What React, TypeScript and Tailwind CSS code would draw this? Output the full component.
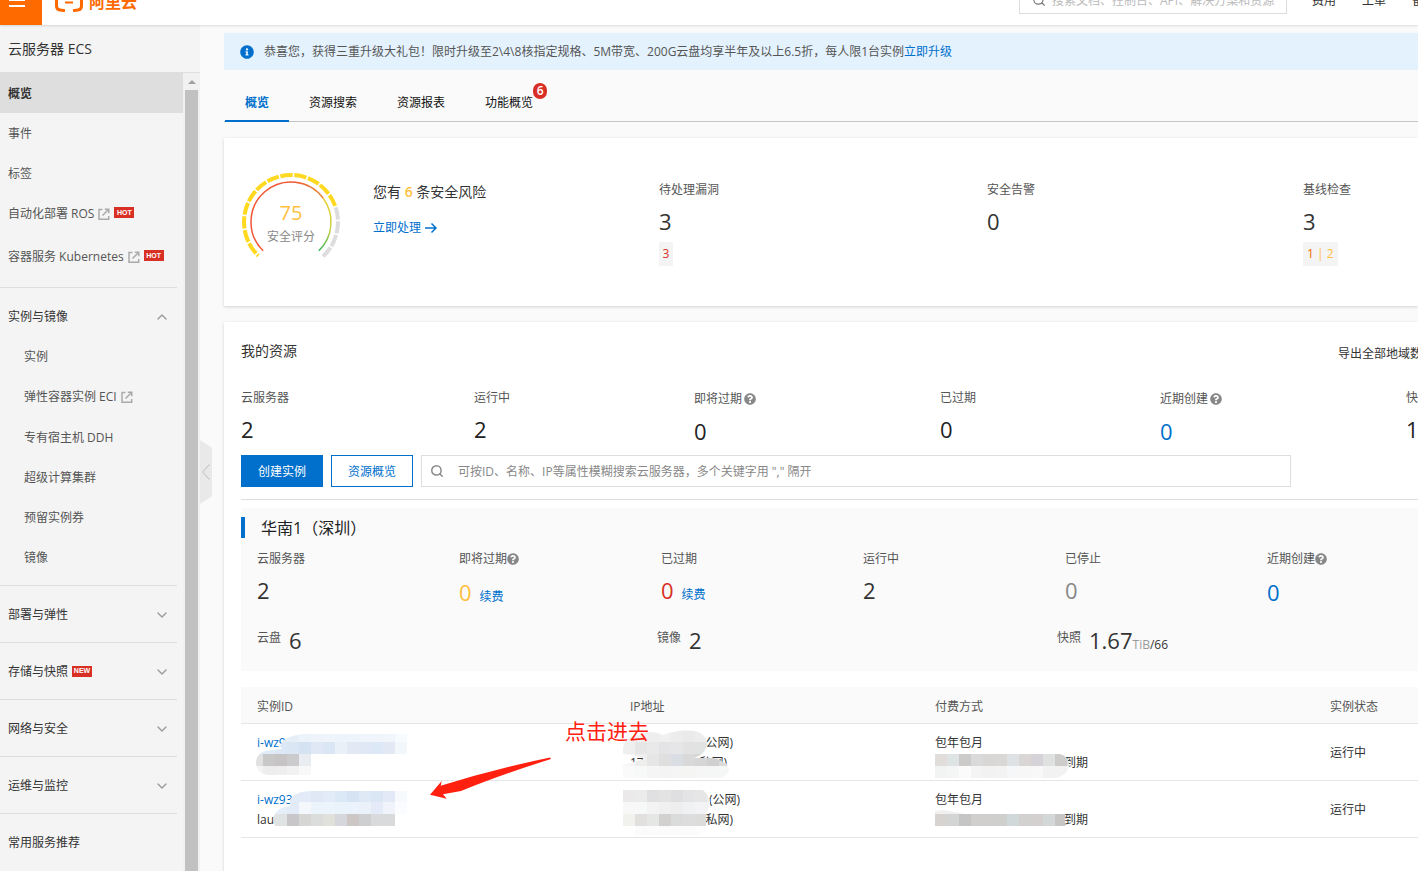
import { ReactNode, useId } from "react";
import { ChevronDown, ChevronUp, Search } from "lucide-react";
import { FaInfoCircle, FaQuestionCircle } from "react-icons/fa";

const topLinks = ["费用", "工单", "备案"];

const mainMenu = [
  { name: "概览", active: true },
  { name: "事件" },
  { name: "标签" },
  { name: "自动化部署 ROS", external: true, tag: "HOT" },
  { name: "容器服务 Kubernetes", external: true, tag: "HOT" },
];

const imageMenu = [
  { name: "实例" },
  { name: "弹性容器实例 ECI", external: true },
  { name: "专有宿主机 DDH" },
  { name: "超级计算集群" },
  { name: "预留实例券" },
  { name: "镜像" },
];

const groups = [
  { name: "部署与弹性" },
  { name: "存储与快照", tag: "NEW" },
  { name: "网络与安全" },
  { name: "运维与监控" },
];

const tabs = [
  { name: "概览", active: true },
  { name: "资源搜索" },
  { name: "资源报表" },
  { name: "功能概览", badge: 6 },
];

const resources = [
  { name: "云服务器", value: "2", width: "w-[233px]" },
  { name: "运行中", value: "2", width: "w-[220px]" },
  { name: "即将过期", value: "0", width: "w-[246px]", help: true },
  { name: "已过期", value: "0", width: "w-[220px]" },
  { name: "近期创建", value: "0", width: "w-[246px]", help: true, color: "text-[#0070cc]" },
  { name: "快照", value: "1.67", width: "w-[100px]" },
];

const regionStats = [
  { name: "云服务器", value: "2", color: "text-[#333]" },
  { name: "即将过期", value: "0", color: "text-[#ffbf40]", help: true, renew: true },
  { name: "已过期", value: "0", color: "text-[#d93026]", renew: true },
  { name: "运行中", value: "2", color: "text-[#333]" },
  { name: "已停止", value: "0", color: "text-[#888]" },
  { name: "近期创建", value: "0", color: "text-[#0070cc]", help: true },
];

const Tag = ({ children }: { children: ReactNode }) => (
  <span className="mb-0.5 flex h-[11px] w-5 items-center justify-center bg-[#d93026] font-['Liberation_Sans',sans-serif] text-[7px] font-bold text-white">
    {children}
  </span>
);

const ExternalIcon = () => (
  <svg className="size-3 shrink-0" viewBox="0 0 12 12" fill="none" stroke="#aaa" strokeWidth="1.5">
    <path d="M4.5 1.5H1v9.7h9.7V8" />
    <path d="M4.5 7.5 10 2M6.8 1.3h4v4" />
  </svg>
);

const Help = () => (
  <button type="button" aria-label="帮助" className="text-[#888]">
    <FaQuestionCircle className="size-3" />
  </button>
);

type MenuItem = { name: string; active?: boolean; external?: boolean; tag?: string };

const MenuLink = ({ item, className }: { item: MenuItem; className: string }) => (
  <a
    href="#"
    className={`flex items-center gap-1 ${className} ${
      item.tag ? "h-[43px] pb-0.5" : item.external ? "h-[41px]" : "h-10 pt-0.5"
    } ${item.active ? "bg-[#dedede] font-semibold text-[#333]" : "text-[#555]"}`}
  >
    {item.name}
    {item.external && <ExternalIcon />}
    {item.tag && <Tag>{item.tag}</Tag>}
  </a>
);

// Pixelated patch that hides private values, 12px per cell
const Mosaic = ({
  rows,
  shape,
  className,
}: {
  rows: string[];
  shape: string;
  className: string;
}) => {
  const id = useId();
  return (
    <svg className={`absolute h-12 w-[156px] ${className}`} viewBox="0 0 156 48" aria-hidden="true">
      <clipPath id={id}>
        <path d={shape} />
      </clipPath>
      <g clipPath={`url(#${id})`} shapeRendering="crispEdges">
        <rect width="156" height="48" fill="#fcfcfc" />
        {rows.map((row, y) =>
          row.split(" ").map((color, x) => (
            <rect key={`${x}-${y}`} x={x * 12} y={y * 12} width="12" height="12" fill={`#${color}`} />
          )),
        )}
      </g>
    </svg>
  );
};

const Logo = () => (
  <svg className="h-5 w-7" viewBox="0 0 28 20" fill="none" stroke="#ff6a00" strokeWidth="3">
    <path d="M10 1.5H5Q1.5 1.5 1.5 5v9q0 3.5 3.5 4l5 .7" />
    <path d="M18 1.5h5q3.5 0 3.5 3.5v9q0 3.5-3.5 4l-5 .7" />
    <path d="M10 10.5h8" strokeWidth="2" />
  </svg>
);

const Header = () => (
  <header className="z-10 h-[25px] shrink-0 overflow-hidden bg-white shadow-[0_1px_2px_rgba(0,0,0,0.12)]">
    <div className="-mt-[25px] flex h-[50px] items-center">
      <button
        type="button"
        aria-label="菜单"
        className="flex h-[50px] w-[42px] flex-col justify-center gap-1 bg-[#ff6a00] pl-[9px]"
      >
        <span className="h-0.5 w-4 bg-white" />
        <span className="h-0.5 w-4 bg-white" />
        <span className="h-0.5 w-4 bg-white" />
      </button>
      <a href="#" className="ml-[13px] flex items-center gap-1.5 pt-1 text-base font-bold text-[#ff6a00]">
        <Logo />
        阿里云
      </a>
      <label className="ml-auto flex h-7 w-[268px] items-center border border-[#ddd] pl-3">
        <Search className="size-[14px] shrink-0 text-[#777]" />
        <input
          aria-label="搜索"
          className="ml-1.5 w-full pt-0.5 text-xs outline-none placeholder:text-[#bbb]"
          placeholder="搜索文档、控制台、API、解决方案和资源"
        />
      </label>
      <nav className="ml-[25px] flex w-[106px] gap-[26px] overflow-hidden pt-0.5 text-[#333]">
        {topLinks.map((link) => (
          <a key={link} href="#" className="shrink-0">
            {link}
          </a>
        ))}
      </nav>
    </div>
  </header>
);

const Sidebar = () => (
  <aside className="relative flex w-[200px] shrink-0 flex-col bg-[#f4f4f4]">
    <h1 className="flex h-12 shrink-0 items-center border-b border-[#dedede] pl-2 text-sm text-[#333]">
      云服务器 ECS
    </h1>
    <div className="flex min-h-0 flex-1">
      <nav className="flex-1 overflow-hidden">
        <div>
          {mainMenu.map((item) => (
            <MenuLink key={item.name} item={item} className="pl-2" />
          ))}
        </div>
        <div className="mr-1.5 mt-2 border-y border-[#dedede] py-2">
          <button type="button" className="flex h-10 w-full items-center justify-between pl-2 pr-[7px] pt-0.5 text-[#333]">
            实例与镜像
            <ChevronUp className="size-4 text-[#999]" strokeWidth={2} />
          </button>
          {imageMenu.map((item) => (
            <MenuLink key={item.name} item={item} className="pl-6" />
          ))}
        </div>
        {groups.map((group) => (
          <div key={group.name} className="mr-1.5 border-b border-[#dedede] py-2">
            <button type="button" className="flex h-10 w-full items-center gap-1 pl-2 pr-[7px] pt-0.5 text-[#333]">
              {group.name}
              {group.tag && <Tag>{group.tag}</Tag>}
              <ChevronDown className="ml-auto size-4 text-[#999]" strokeWidth={2} />
            </button>
          </div>
        ))}
        <a href="#" className="mt-2 flex h-10 items-center pl-2 pt-0.5 text-[#333]">
          常用服务推荐
        </a>
      </nav>
      <div className="flex w-[17px] flex-col items-center bg-[#f1f1f1]" aria-hidden="true">
        <svg className="h-[17px] w-2 shrink-0" viewBox="0 0 8 17">
          <path d="M0 11h8L4 7z" fill="#a0a0a0" />
        </svg>
        <div className="w-[13px] flex-1 bg-[#c1c1c1]" />
      </div>
    </div>
    <button
      type="button"
      aria-label="收起"
      className="absolute left-full top-[415px] flex h-16 w-3 items-center justify-center bg-[#e9e9e9] text-[#bbb] [clip-path:polygon(0_0,100%_12%,100%_88%,0_100%)]"
    >
      <svg className="h-4 w-2" viewBox="0 0 8 16" fill="none" stroke="currentColor">
        <path d="M7.5 .5.7 8l6.800 7.500" />
      </svg>
    </button>
  </aside>
);

const polar = (deg: number, r: number) => {
  const rad = (deg * Math.PI) / 180;
  return `${(52 + r * Math.cos(rad)).toFixed(2)} ${(52 + r * Math.sin(rad)).toFixed(2)}`;
};

const arc = (from: number, to: number, r: number) =>
  `M${polar(from, r)}A${r} ${r} 0 ${to - from > 180 ? 1 : 0} 1 ${polar(to, r)}`;

// Degrees at which the dial is cut, clockwise from three o'clock
const cuts = [133, 137, 154, 171, 188, 205, 222, 239, 256, 273, 290, 307, 324, 341, 358, 375, 392, 408];

const Gauge = () => (
  <div className="relative size-[104px] shrink-0">
    <svg viewBox="0 0 104 104" className="size-full" fill="none">
      <defs>
        <linearGradient id="risk" x1="0" y1="0" x2="1" y2="0">
          <stop offset="0.6" stopColor="#f15533" />
          <stop offset="1" stopColor="#e8903a" />
        </linearGradient>
        <linearGradient id="safe" x1="0" y1="0" x2="0" y2="1">
          <stop offset="0" stopColor="#e8d030" />
          <stop offset="0.6" stopColor="#c6cf45" />
          <stop offset="1" stopColor="#35b558" />
        </linearGradient>
      </defs>
      {cuts.slice(0, -1).map((from, i) => (
        <path
          key={from}
          d={arc(from + 1, cuts[i + 1] - 1, 47)}
          stroke={from < 341 ? "#ffd91f" : "#dddddd"}
          strokeWidth="4"
        />
      ))}
      <path d={arc(134, 324, 40)} stroke="url(#risk)" strokeWidth="1.5" />
      <path d={arc(324, 406, 40)} stroke="url(#safe)" strokeWidth="1.5" />
    </svg>
    <div className="absolute inset-0 flex flex-col items-center pt-[31px]">
      <span className="text-xl leading-6 text-[#ffbf40]">75</span>
      <span className="leading-6 text-[#888]">安全评分</span>
    </div>
  </div>
);

const Security = () => (
  <section className="flex h-[168px] bg-white pl-[15px] pt-8 shadow-[0_1px_3px_rgba(0,0,0,0.16)]">
    <Gauge />
    <div className="ml-[30px] w-[286px] shrink-0 pt-3">
      <p className="text-sm leading-5 text-[#333]">
        您有 <b className="font-semibold text-[#ffbf40]">6</b> 条安全风险
      </p>
      <a href="#" className="mt-4 flex h-5 items-center gap-1 text-[#0070cc]">
        立即处理
        <svg className="h-3 w-3" viewBox="0 0 12 12" fill="none" stroke="currentColor" strokeWidth="1.5">
          <path d="M0 6h11M6.500 1.500 11 6 6.500 10.500" />
        </svg>
      </a>
    </div>
    <div className="w-[328px] shrink-0 pt-[10px]">
      <p className="leading-5">待处理漏洞</p>
      <p className="my-[9px] text-[22px] leading-6 text-[#333]">3</p>
      <span className="inline-block w-[14px] bg-[#f4f4f4] text-center leading-6 text-[#d93026]">3</span>
    </div>
    <div className="w-[316px] shrink-0 pt-[10px]">
      <p className="leading-5">安全告警</p>
      <p className="my-[9px] text-[22px] leading-6 text-[#333]">0</p>
    </div>
    <div className="shrink-0 pt-[10px]">
      <p className="leading-5">基线检查</p>
      <p className="my-[9px] text-[22px] leading-6 text-[#333]">3</p>
      <span className="inline-block bg-[#f4f4f4] px-1 leading-6 text-[#ffbf40]">
        <span className="text-[#f56a00]">1</span> | 2
      </span>
    </div>
  </section>
);

const Region = () => (
  <div className="mt-2 h-[163px] bg-[#fafafa] pt-[9px]">
    <h3 className="flex h-[21px] items-center border-l-4 border-[#0070cc] pl-4 text-base text-[#222]">
      华南1（深圳）
    </h3>
    <div className="flex pl-4 pt-[11px]">
      {regionStats.map((stat) => (
        <div key={stat.name} className="w-[202px] shrink-0">
          <p className="flex h-5 items-center">
            {stat.name}
            {stat.help && <Help />}
          </p>
          <p
            className={`flex items-baseline gap-2 text-[22px] leading-7 ${
              stat.help ? "mt-[9px]" : "mt-[7px]"
            } ${stat.color}`}
          >
            {stat.value}
            {stat.renew && (
              <a href="#" className="text-xs text-[#0070cc]">
                续费
              </a>
            )}
          </p>
        </div>
      ))}
    </div>
    <div className="flex pl-4 pt-5 text-[22px] leading-7 text-[#333]">
      <p className="flex w-[400px] shrink-0 gap-2">
        <span className="text-xs leading-6 text-[#555]">云盘</span>6
      </p>
      <p className="flex w-[400px] shrink-0 gap-2">
        <span className="text-xs leading-6 text-[#555]">镜像</span>2
      </p>
      <p className="flex items-baseline">
        <span className="mr-2 self-start text-xs leading-6 text-[#555]">快照</span>
        1.67
        <span className="text-xs text-[#999]">TiB</span>
        <span className="text-xs">/66</span>
      </p>
    </div>
  </div>
);

const InstanceTable = () => (
  <table className="mt-4 w-full table-fixed text-left text-[#333]">
    <thead>
      <tr className="h-9 border-b border-[#e6e6e6] bg-[#fafafa] text-[#555]">
        <th className="w-[373px] pl-4 pt-1 font-normal">实例ID</th>
        <th className="w-[305px] pl-4 pt-1 font-normal">IP地址</th>
        <th className="w-[395px] pl-4 pt-1 font-normal">付费方式</th>
        <th className="pl-4 pt-1 font-normal">实例状态</th>
      </tr>
    </thead>
    <tbody className="leading-5">
      <tr className="h-[57px] border-b border-[#e6e6e6]">
        <td className="pl-4 pt-0.5">
          <div className="relative h-10">
            <a href="#" className="text-[#0070cc]">
              i-wz9
            </a>
            <Mosaic
              className="-left-[6px] -top-[3px]"
              rows={[
                "ffffff ffffff e4ecf8 e6eef8 edf3fb eff4fb f0f4fb eef4fb eef4fb f0f5fb f0f5fb f1f6fc f7fbfd",
                "e6edf7 e0ecf8 dce8f5 dae6f4 d5e2f2 dfe8f4 dae6f4 eaf0f8 e2e9f5 dfe8f4 dce8f5 e2e9f5 f2f7fc",
                "e2e1e1 c8c8c8 c6c4c4 cbcbce e9edf1",
                "f3f3f3 ededed eeeeee f2f2f2 f8f8f8",
              ]}
              shape="M29 16Q34 5 54 4H156V24H60V45H18Q5 44 5 32 6 20 22 20L31 19Z"
            />
          </div>
        </td>
        <td className="pl-4 pt-0.5">
          <div className="relative h-10">
            <p className="pl-[72px]">(公网)</p>
            <p className="flex">
              <span className="w-[66px]">17</span>(私网)
            </p>
            <Mosaic
              className="-left-[7px] -top-[3px]"
              rows={[
                "f1f1f1 f0f0f0 eeeeee f0f0f0 ececec eaeaea ededed",
                "efefef e6e6e6 e9e9ea e4e4e6 e6e6e8 e2e2e2 e1e3e3",
                "f5f5f5 eeeeed e6e6e6 e0dfe0 dadde3 dad9da d6d6d6 d0d0d0 dbdbdb",
                "fafafa f7f9f8 f5f5f5 f4f4f4 f5f5f5 f5f5f3 f5f6f5 f5f7f6 f5f7f6",
              ]}
              shape="M0 18Q2 5 16 5 27 -1 40 5 54 -1 72 1 84 4 84 16 81 25 71 28H91L104 34 106 40Q105 45 98 48H0V35L22 29 14 26 0 24Z"
            />
          </div>
        </td>
        <td className="pl-4 pt-0.5">
          <div className="relative h-10">
            <p>包年包月</p>
            <p className="pl-[129px]">到期</p>
            <Mosaic
              className="left-0 top-[21px]"
              rows={[
                "e0dddb dee3e4 cccbca dadada d8d7d5 dad8d7 dee2e4 dad6d6 d5d3d7 dfe1e0 cecccb dddddd",
                "f1f4f3 f4f5f5 fbfbfb f4f4f4 f2f2f2 f3f3f3 f6f7f8 f7f7f7 f7f8f7 f2f2f2 f2f2f2 f6f6f6",
              ]}
              shape="M0 0H125Q134 3 134 12 132 22 120 24H0Z"
            />
          </div>
        </td>
        <td className="pl-4 pt-0.5">运行中</td>
      </tr>
      <tr className="h-[57px] border-b border-[#e6e6e6]">
        <td className="pl-4 pt-0.5">
          <div className="relative h-10">
            <a href="#" className="text-[#0070cc]">
              i-wz93
            </a>
            <p>lau</p>
            <Mosaic
              className="-left-[6px] top-0"
              rows={[
                "ffffff ffffff ffffff e4ebf8 e2ebf7 dfe8f4 e2ecf8 dbe8f5 d5e3f3 dfe9f5 dbe6f5 e3e9f6 f6fafd",
                "ffffff e9f2fb e6eefa e3ebf8 f4f7fc ebf3fb ebf3fb eaf2fa eaf3fb ebf1f9 e4eaf7 f0f4fa fafcff",
                "ffffff e2ded9 dfe3e3 c9c6ca d6d6d5 dbdcdc e1e1dc d5d7dd ccc6c4 cdcfd0 d8dadb d8dadb ffffff",
              ]}
              shape="M39 10Q44 1 62 1H156V24H144V36H24Q19 22 33 17L39 16Z"
            />
          </div>
        </td>
        <td className="pl-4 pt-0.5">
          <div className="relative h-10">
            <p className="pl-[79px]">(公网)</p>
            <p className="pl-[72px]">(私网)</p>
            <Mosaic
              className="-left-[7px] top-0"
              rows={[
                "ece9ea ebebeb e0dfe1 e3e3e4 dfdfe2 e4e4e6 e6e6e6 eeeeee",
                "f8f8f8 f7f9f8 f3f3f3 f0f0f0 eeeeee f0f1f2 f3f3f5 f3f3f5",
                "f1f1ee e2e0df e4e7e4 d3d1d0 dadcdc dcdddc dcdcda dcdcda",
                "fcfcfc fbfbfb fbfbfb fbfbfb fbfbfb fbfbfb fcfcfc fcfcfc",
              ]}
              shape="M0 0H80Q87 6 87 14L83 24V36L78 45H12V36H0Z"
            />
          </div>
        </td>
        <td className="pl-4 pt-0.5">
          <div className="relative h-10">
            <p>包年包月</p>
            <p className="pl-[129px]">到期</p>
            <Mosaic
              className="left-0 top-3"
              rows={[
                "f0f0f0 f0f0f0 f3f3f3 f3f3f3 f8f8f8 f8f8f8",
                "d6d3d1 d3d5d4 c5c5c5 d0cfce d0cfce cfcfcd d0d8d9 d3d0d0 d3d0cf d4d7d7 c8c6c4",
              ]}
              shape="M0 9 8 8 30 12H130V24H0Z"
            />
          </div>
        </td>
        <td className="pl-4 pt-0.5">运行中</td>
      </tr>
    </tbody>
  </table>
);

const Resources = () => (
  <section className="mt-4 flex-1 bg-white pl-[17px] pt-[19px] shadow-[0_1px_3px_rgba(0,0,0,0.16)]">
    <div className="flex h-5 items-center justify-between">
      <h2 className="text-sm text-[#333]">我的资源</h2>
      <a href="#" className="w-20 whitespace-nowrap pt-1.5 text-[#333]">
        导出全部地域数据
      </a>
    </div>
    <div className="flex pt-[27px]">
      {resources.map((item) => (
        <div key={item.name} className={`shrink-0 ${item.width}`}>
          <p className={`flex items-center gap-0.5 ${item.help ? "h-[22px]" : "h-5"}`}>
            {item.name}
            {item.help && <Help />}
          </p>
          <p className={`mt-[7px] h-[30px] text-[22px] leading-7 ${item.color || "text-[#222]"}`}>
            {item.value}
          </p>
        </div>
      ))}
    </div>
    <div className="mt-2 flex gap-2 border-b border-[#dedede] pb-3">
      <button type="button" className="h-8 w-[82px] bg-[#0070cc] pt-0.5 text-white">
        创建实例
      </button>
      <button type="button" className="h-8 w-[82px] border border-[#0070cc] pt-0.5 text-[#0070cc]">
        资源概览
      </button>
      <label className="mr-[127px] flex h-8 flex-1 items-center border border-[#dedede] pl-2">
        <Search className="size-[14px] shrink-0 text-[#888]" strokeWidth={2.5} />
        <input
          aria-label="搜索云服务器"
          className="ml-[14px] w-full pt-0.5 outline-none placeholder:text-[#888]"
          placeholder={'可按ID、名称、IP等属性模糊搜索云服务器，多个关键字用 "," 隔开'}
        />
      </label>
    </div>
    <Region />
    <InstanceTable />
  </section>
);

// Red hand-drawn hint pointing at the second instance
const Hint = () => (
  <div className="pointer-events-none absolute left-[230px] top-[690px] flex items-start text-[#ff2010]">
    <svg className="mt-[42px] h-[42px] w-[122px]" viewBox="430 757 122 42" fill="currentColor">
      <path d="M430 794.700 441.700 781 440.700 785.700 Q495 769 550 757.500L551 759Q500 775 461 791L443 794.300 446.700 798.700Z" />
    </svg>
    <span className="ml-[13px] text-[21px] leading-8">点击进去</span>
  </div>
);

const App = () => {
  return (
    <div className="flex h-screen flex-col overflow-hidden bg-[#fafafa] font-['Open_Sans','Noto_Sans_CJK_SC',sans-serif] text-xs text-[#555]">
      <Header />
      <div className="flex min-h-0 flex-1">
        <Sidebar />
        <main className="relative flex min-w-0 flex-1 flex-col overflow-hidden pl-6 pt-2">
          <div className="flex h-[37px] shrink-0 items-center bg-[#e4f2fe] pl-4">
            <FaInfoCircle className="mr-[10px] size-[14px] text-[#0070cc]" />
            <span>
              恭喜您，获得三重升级大礼包！限时升级至2\4\8核指定规格、5M带宽、200G云盘均享半年及以上6.5折，每人限1台实例
            </span>
            <a href="#" className="text-[#0070cc]">
              立即升级
            </a>
          </div>
          <nav className="mb-4 mt-[13px] flex h-[39px] shrink-0 border-b border-[#c6c6c6] pl-px text-[#111]">
            {tabs.map((tab) => (
              <a
                key={tab.name}
                href="#"
                className={`relative -mb-px flex items-center px-5 ${
                  tab.active ? "border-b-2 border-[#0070cc] pt-0.5 font-semibold text-[#0070cc]" : ""
                }`}
              >
                {tab.name}
                {tab.badge && (
                  <span className="absolute right-[6px] top-0 flex h-4 w-[14px] items-center justify-center rounded-full bg-[#d93026] font-semibold text-white">
                    {tab.badge}
                  </span>
                )}
              </a>
            ))}
          </nav>
          <Security />
          <Resources />
          <Hint />
        </main>
      </div>
    </div>
  );
};

export default App;
